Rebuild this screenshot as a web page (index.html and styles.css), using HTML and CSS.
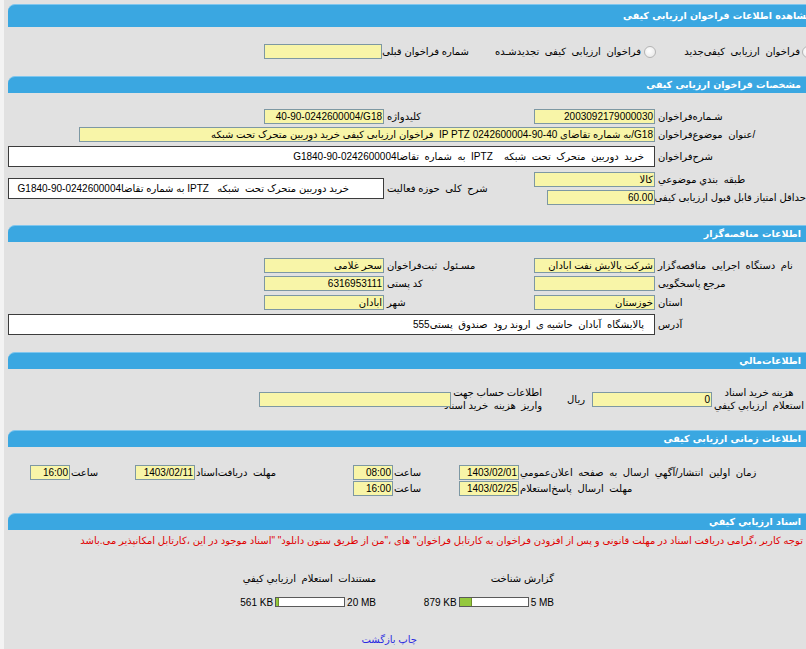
FILE: index.html
```html
<!DOCTYPE html>
<html lang="fa">
<head>
    <meta charset="UTF-8">
    <meta name="viewport" content="width=device-width, initial-scale=1.0">
    <title>مشاهده اطلاعات فراخوان ارزیابی کیفی</title>
    <link rel="stylesheet" href="styles.css">
</head>
<body>
<div class="page">

    <div class="bar bar-main">مشاهده اطلاعات فراخوان ارزیابی کیفی</div>
    <div class="opts">
        <span class="radio radio-first"></span>
        <span class="opt-1">فراخوان  ارزیابی  کیفی&zwnj;جدید</span>
        <span class="radio"></span>
        <span class="opt-2">فراخوان  ارزیابی  کیفی  تجدیدشـده</span>
        <span class="opt-3">شماره فراخوان قبلی</span>
        <span class="fld w-118"></span>
    </div>

    <div class="bar">مشخصات فراخوان ارزیابی کیفی</div>
    <div class="form form-main">
        <span class="lbl">شـماره&zwnj;فراخوان</span>
        <span class="fld">2003092179000030</span>
        <span class="lbl">کلیدواژه</span>
        <span class="fld w-120 ltr">40-90-0242600004/G18</span>

        <span class="lbl">/عنوان  موضوع&zwnj;فراخوان</span>
        <span class="fld span-3 w-576">G18/به شماره تقاضای 40-90-0242600004 IP PTZ  فراخوان ارزیابی کیفی خرید دوربین متحرک تحت شبکه</span>

        <span class="lbl">شرح&zwnj;فراخوان</span>
        <div class="box span-3">خرید  دوربین  متحرک  تحت  شبکه    IPTZ  به  شماره  تقاضاG1840-90-0242600004</div>

        <span class="lbl">طبقه  بندي موضوعي</span>
        <span class="fld">کالا</span>
        <span class="lbl rows-2">شرح  کلی  حوزه فعالیت</span>
        <div class="box box-side rows-2">خرید دوربین متحرک تحت  شبکه   IPTZ به شماره تقاضاG1840-90-0242600004</div>

        <span class="lbl">حداقل امتیاز قابل قبول ارزیابی کیفی</span>
        <span class="fld w-108">60.00</span>
    </div>

    <div class="bar">اطلاعات مناقصه&zwnj;گزار</div>
    <div class="form form-org">
        <span class="lbl">نام  دستگاه  اجرایی  مناقصه&zwnj;گزار</span>
        <span class="fld">شرکت پالایش نفت ابادان</span>
        <span class="lbl">مسـئول  ثبت&zwnj;فراخوان</span>
        <span class="fld w-120">سحر غلامی</span>

        <span class="lbl">مرجع پاسخگویی</span>
        <span class="fld"></span>
        <span class="lbl">کد پستی</span>
        <span class="fld w-120">6316953111</span>

        <span class="lbl">استان</span>
        <span class="fld">خوزستان</span>
        <span class="lbl">شهر</span>
        <span class="fld w-120">ابادان</span>

        <span class="lbl">آدرس</span>
        <div class="box span-3">پالایشگاه  آبادان  حاشیه ی  اروند رود  صندوق  پستی555</div>
    </div>

    <div class="bar">اطلاعات&zwnj;مالي</div>
    <div class="money">
        <span class="lbl-2l w-94">هزینه خرید اسناد<br>استعلام  ارزيابي کيفي</span>
        <span class="fld w-120">0</span>
        <span class="cur">ریال</span>
        <span class="lbl-2l w-90 start">اطلاعات حساب جهت<br>واریز  هزینه  خرید اسناد</span>
        <span class="fld w-192"></span>
    </div>

    <div class="bar">اطلاعات زمانی ارزیابی کیفی</div>
    <div class="times">
        <span class="lbl">زمان  اولین  انتشار/آگهي  ارسال  به  صفحه  اعلان&zwnj;عمومي</span>
        <span class="fld">1403/02/01</span>
        <span class="lbl">ساعت</span>
        <span class="fld">08:00</span>
        <span class="lbl">مهلت  دریافت&zwnj;اسناد</span>
        <span class="fld">1403/02/11</span>
        <span class="lbl">ساعت</span>
        <span class="fld w-40">16:00</span>

        <span class="lbl">مهلت  ارسال  پاسخ&zwnj;استعلام</span>
        <span class="fld">1403/02/25</span>
        <span class="lbl">ساعت</span>
        <span class="fld">16:00</span>
    </div>

    <div class="bar">اسناد ارزيابي کيفي</div>
    <p class="notice">توجه کاربر ،گرامی دریافت اسناد در مهلت قانونی و پس از افزودن فراخوان به کارتابل فراخوان" های ،"من از طریق ستون دانلود" "اسناد موجود در این ،کارتابل امکانپذیر می.باشد</p>

    <div class="docs">
        <div class="doc doc-a">
            <div class="doc-title">گزارش شناخت</div>
            <div class="doc-size">
                <span class="num">5 MB</span>
                <span class="meter"><span class="meter-fill" style="width: 17%"></span></span>
                <span class="num">879 KB</span>
            </div>
        </div>
        <div class="doc doc-b">
            <div class="doc-title">مستندات  استعلام  ارزيابي كيفي</div>
            <div class="doc-size">
                <span class="num">20 MB</span>
                <span class="meter"><span class="meter-fill" style="width: 3%"></span></span>
                <span class="num">561 KB</span>
            </div>
        </div>
    </div>

    <div class="links">
        <a href="#">چاپ</a>
        <a href="#">بازگشت</a>
    </div>

</div>
</body>
</html>
```

FILE: styles.css
```css
html, body {
    margin: 0;
    padding: 0;
    overflow: hidden;
}

body {
    background-color: #f3f3f3;
    font-family: "Liberation Sans", "DejaVu Sans", sans-serif;
    font-size: 10px;
    color: #000;
}

.page {
    width: 812px;
    height: 660px;
    margin-left: 4px;
    padding: 4px 0 0 4px;
    box-sizing: border-box;
    background-color: #e1e1e1;
    direction: rtl;
}

/* blue section headers */
.bar {
    height: 16px;
    line-height: 16px;
    padding-right: 15px;
    border-top: 1px solid #7fc6ee;
    border-top-left-radius: 7px;
    background-color: #3aa7e1;
    color: white;
    font-family: "DejaVu Sans", sans-serif;
    font-size: 9.5px;
    font-weight: bold;
    white-space: nowrap;
    overflow: hidden;
}

.bar-main {
    height: 22px;
    line-height: 22px;
    padding-right: 4px;
}

/* yellow read-only fields */
.fld {
    display: block;
    width: 121px;
    height: 15px;
    line-height: 13px;
    padding: 0 1px;
    box-sizing: border-box;
    border: 1px solid #7d98a3;
    background-color: #f8f5a8;
    white-space: pre;
    overflow: hidden;
    align-self: center;
    justify-self: start;
}

.ltr {
    direction: ltr;
    text-align: right;
}

.box {
    height: 21px;
    line-height: 19px;
    padding-right: 10px;
    box-sizing: border-box;
    border: 1px solid #3c3c3c;
    background-color: white;
    white-space: pre;
    overflow: hidden;
    align-self: center;
}

.box-side {
    padding-right: 34px;
}

.lbl {
    align-self: center;
    text-align: left;
    padding-left: 3px;
    white-space: pre;
}

/* first section: radio options */
.opts {
    display: flex;
    align-items: center;
    height: 15px;
    margin: 17px 0;
    white-space: pre;
}

.radio {
    width: 10px;
    height: 10px;
    border: 1px solid #b4b4b4;
    border-radius: 50%;
    background: radial-gradient(circle at 40% 40%, #ffffff, #e4e4e4);
    flex-shrink: 0;
}

.radio-first {
    margin-right: 2px;
}

.opt-1 {
    width: 112px;
    margin: 0 2px 0 32px;
}

.opt-2 {
    width: 142px;
    margin: 0 3px 0 30px;
}

.opt-3 {
    width: 83px;
    margin-left: 4px;
}

/* label / field grids */
.form {
    display: grid;
    grid-template-columns: 151px 121px 150px 1fr;
    padding-right: 10px;
}

.form-main {
    grid-template-rows: 18px 18px 27px 18px 18px;
    margin: 14px 0 19px;
}

.form-org {
    grid-template-rows: 18px 19px 18px 27px;
    margin: 14px 0 14px;
}

.span-3 {
    grid-column: span 3;
}

.rows-2 {
    grid-row: span 2;
}

.w-40 { width: 40px; }
.w-576 { width: 576px; }
.w-108 { width: 108px; }
.w-118 { width: 118px; }
.w-120 { width: 120px; }
.w-192 { width: 192px; }

/* financial row */
.money {
    display: flex;
    align-items: center;
    height: 26px;
    margin: 17px 0 18px;
    padding-right: 10px;
}

.lbl-2l {
    line-height: 13px;
    text-align: center;
    white-space: pre;
}

.lbl-2l.start {
    text-align: right;
    margin-left: 1px;
}

.w-94 { width: 94px; }
.w-90 { width: 90px; }

.cur {
    width: 43px;
    padding-right: 7px;
}

/* dates */
.times {
    display: grid;
    grid-template-columns: 287px 60px 66px 40px 158px 60px 65px 1fr;
    grid-template-rows: 16px 16px;
    margin: 17px 0;
    padding-right: 10px;
}

.times .fld {
    width: 100%;
}

.times .fld.w-40 {
    width: 40px;
}

.times .lbl {
    padding-left: 1px;
}

/* documents */
.notice {
    margin: 4px 0 0;
    padding-right: 13px;
    line-height: 14px;
    color: #e00000;
    white-space: nowrap;
}

.docs {
    display: flex;
    margin-top: 24px;
    padding-right: 262px;
}

.doc-a {
    width: 120px;
    margin-left: 58px;
}

.doc-b {
    width: 124px;
}

.doc-title {
    height: 14px;
    line-height: 14px;
    white-space: pre;
}

.doc-size {
    display: flex;
    align-items: center;
    gap: 2px;
    margin-top: 9px;
    height: 14px;
    white-space: nowrap;
}

.num {
    direction: ltr;
    unicode-bidi: isolate;
}

.meter {
    width: 70px;
    height: 10px;
    flex-shrink: 0;
    box-sizing: border-box;
    border: 1px solid #5a5a5a;
    background-color: white;
    direction: ltr;
}

.meter-fill {
    display: block;
    height: 100%;
    background-color: #94c83d;
    border-right: 1px solid #6f8f2a;
}

.links {
    margin-top: 24px;
    padding-right: 399px;
    line-height: 14px;
}

.links a {
    color: #2a2ae0;
    text-decoration: none;
}
```
